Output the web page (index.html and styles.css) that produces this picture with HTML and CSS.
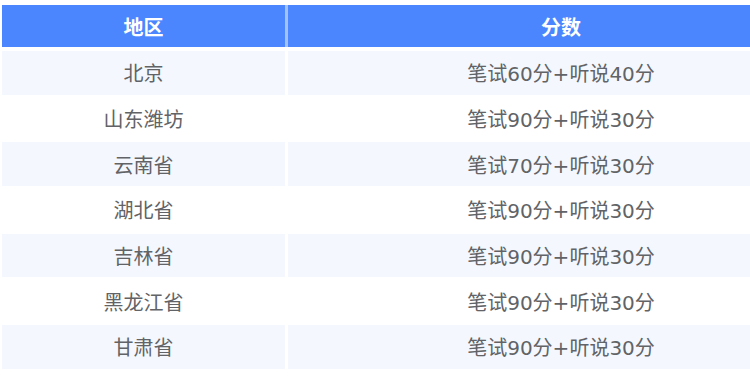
FILE: index.html
```html
<!DOCTYPE html>
<html lang="zh-CN">
<head>
<meta charset="utf-8">
<title>地区分数</title>
<link rel="stylesheet" href="styles.css">
</head>
<body>
<div class="table">
  <div class="thead">
    <div class="th col-a">地区</div>
    <div class="th col-b">分数</div>
  </div>
  <div class="tr odd"><div class="td col-a">北京</div><div class="td col-b">笔试60分+听说40分</div></div>
  <div class="tr"><div class="td col-a">山东潍坊</div><div class="td col-b">笔试90分+听说30分</div></div>
  <div class="tr odd"><div class="td col-a">云南省</div><div class="td col-b">笔试70分+听说30分</div></div>
  <div class="tr"><div class="td col-a">湖北省</div><div class="td col-b">笔试90分+听说30分</div></div>
  <div class="tr odd"><div class="td col-a">吉林省</div><div class="td col-b">笔试90分+听说30分</div></div>
  <div class="tr"><div class="td col-a">黑龙江省</div><div class="td col-b">笔试90分+听说30分</div></div>
  <div class="tr odd"><div class="td col-a">甘肃省</div><div class="td col-b">笔试90分+听说30分</div></div>
</div>
</body>
</html>
```
FILE: styles.css
```css
html, body {
  margin: 0;
  padding: 0;
  background: #ffffff;
}
body {
  font-family: "Noto Sans CJK SC", "Noto Sans", sans-serif;
}
.table {
  width: 748px;
  padding: 5px 0 0 2px;
}
.thead {
  display: flex;
  height: 42px;
  margin-bottom: 4px;
  background: #4b86fe;
}
.th {
  display: flex;
  align-items: center;
  justify-content: center;
  color: #ffffff;
  font-size: 20px;
  font-weight: 700;
}
.th + .th {
  border-left: 3px solid #a3c1fe;
}
.col-a {
  width: 283px;
  flex: none;
}
.col-b {
  flex: 1;
  padding-left: 84px;
}
.tr {
  display: flex;
  gap: 3px;
  height: 43.7px;
  margin-bottom: 2px;
}
.td {
  display: flex;
  align-items: center;
  justify-content: center;
  color: #616366;
  font-size: 20px;
  background: #ffffff;
}
.td.col-b {
  font-family: "DejaVu Sans", "Noto Sans CJK SC", sans-serif;
  font-size: 20px;
}
.tr.odd .td {
  background: #f4f8fe;
}
```
